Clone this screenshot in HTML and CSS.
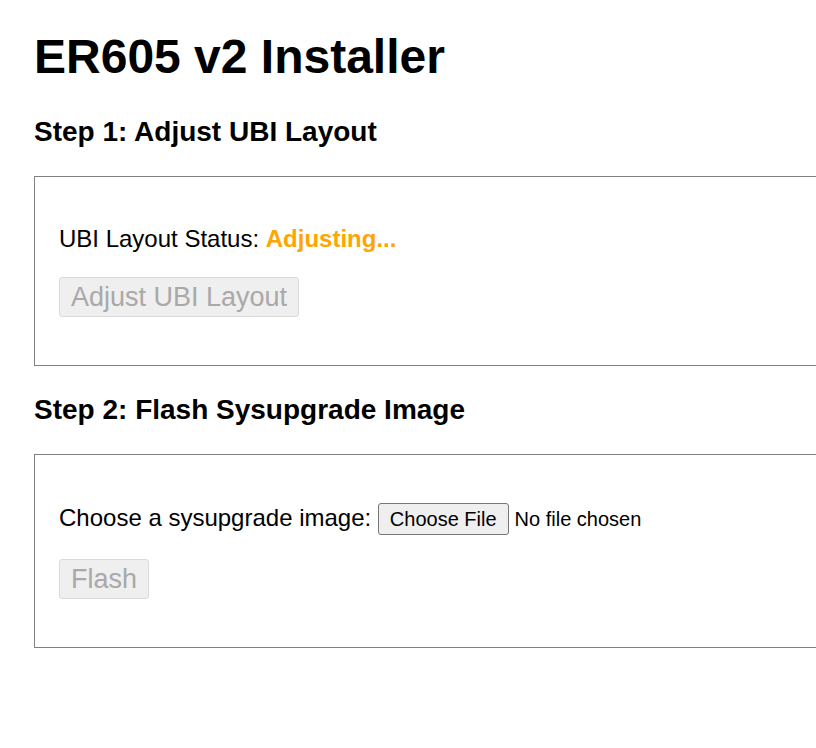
FILE: index.html
```html
<!DOCTYPE html>
<html lang="en">
<head>
<meta charset="utf-8">
<title>ER605 v2 Installer</title>
<link rel="stylesheet" href="styles.css">
</head>
<body>
  <h1 class="title">ER605 v2 Installer</h1>

  <h3 class="step-title">Step 1: Adjust UBI Layout</h3>
  <div class="panel">
    <p class="row">UBI Layout Status: <span class="status">Adjusting...</span></p>
    <p class="row"><button class="btn" disabled>Adjust UBI Layout</button></p>
  </div>

  <h3 class="step-title">Step 2: Flash Sysupgrade Image</h3>
  <div class="panel">
    <p class="row">Choose a sysupgrade image: <input class="file" type="file"></p>
    <p class="row"><button class="btn" disabled>Flash</button></p>
  </div>
</body>
</html>
```
FILE: styles.css
```css
html {
  overflow-x: hidden;
}

body {
  margin: 0;
  padding: 0 34px;
  font-family: "Liberation Sans", Arial, sans-serif;
  font-size: 24px;
  color: #000;
  background: #fff;
}

.title {
  font-size: 48px;
  font-weight: bold;
  margin: 29px 0 32px;
}

.step-title {
  font-size: 28px;
  font-weight: bold;
  margin: 28px 0;
}

.panel {
  border: 1px solid #808080;
  padding: 0 24px;
  width: 820px;
}

.row {
  margin: 24px 0;
}

.panel .row:first-child {
  margin-top: 48px;
}

.panel .row:last-child {
  margin-bottom: 48px;
}

.status {
  color: #ffa500;
  font-weight: bold;
}

.btn {
  font-family: "Liberation Sans", Arial, sans-serif;
  font-size: 27px;
  line-height: 32px;
  padding: 3px 11px;
  border: 1px solid #d9d9d9;
  border-radius: 3px;
  background: #efefef;
  color: #a9a9a9;
  margin: 0;
}

.file {
  font-family: "Liberation Sans", Arial, sans-serif;
  font-size: 20px;
  color: #000;
  vertical-align: baseline;
}

.file::file-selector-button {
  font-family: "Liberation Sans", Arial, sans-serif;
  font-size: 20px;
  line-height: 24px;
  padding: 3px 11px;
  border: 1px solid #767676;
  border-radius: 3px;
  background: #efefef;
  color: #000;
  margin: 0 6px 0 0;
}
```
